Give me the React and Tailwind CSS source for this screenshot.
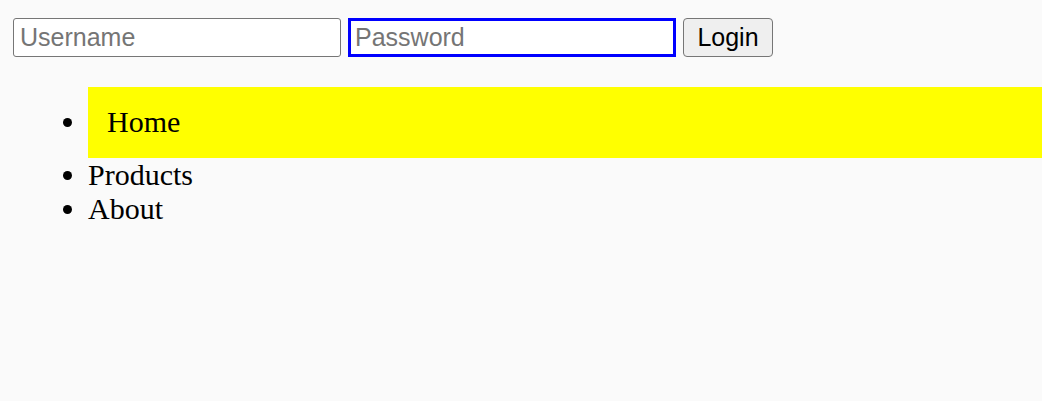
export default function App() {
  return (
    <div className="min-h-screen bg-[#fafafa] font-['Liberation_Serif',serif] text-black">
      <div className="flex items-center pt-[18px] pl-[13px] font-['Liberation_Sans',Arial,sans-serif] text-[25px]">
        <input
          type="text"
          placeholder="Username"
          className="h-[39px] w-[328px] rounded-[3px] border border-[#767676] bg-white pl-[6px] text-[25px] placeholder:text-[#757575] outline-none"
        />
        <input
          type="password"
          placeholder="Password"
          className="ml-[7px] h-[39px] w-[328px] border-[3px] border-[#0000ff] bg-white pl-[4px] text-[25px] placeholder:text-[#757575] outline-none"
        />
        <button className="ml-[7px] h-[39px] w-[90px] rounded-[4px] border border-[#767676] bg-[#efefef] text-[25px] text-black">
          Login
        </button>
      </div>
      <ul className="mt-[30px] list-disc pl-[88px] text-[30px] leading-[34.5px]">
        <li className="bg-[#ffff00] pt-[18px] pb-[18px] pl-[19px]">Home</li>
        <li>Products</li>
        <li>About</li>
      </ul>
    </div>
  );
}
